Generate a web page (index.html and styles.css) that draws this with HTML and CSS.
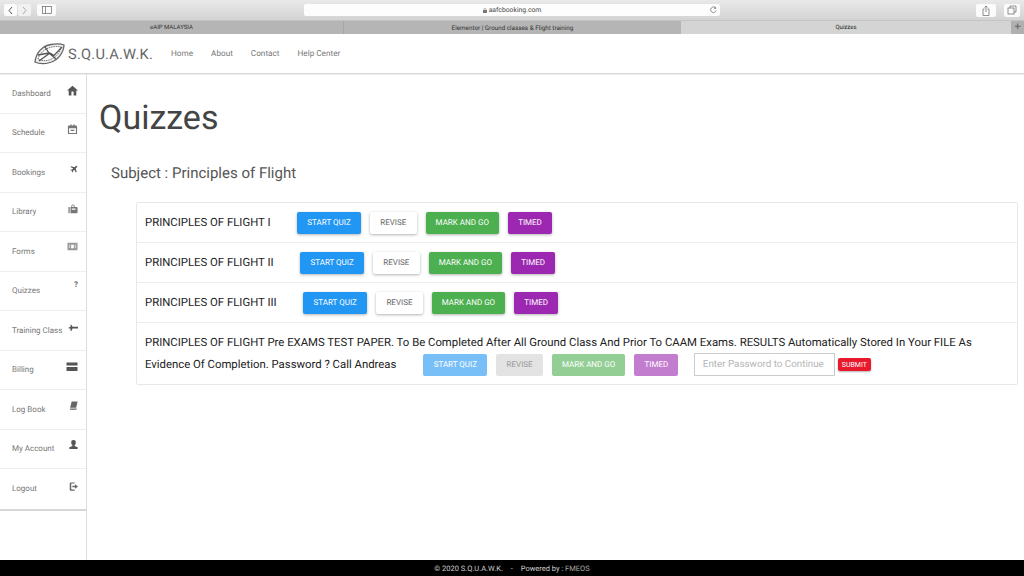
FILE: index.html
```html
<!DOCTYPE html>
<html lang="en">
<head>
<meta charset="utf-8">
<title>Quizzes</title>
<link rel="stylesheet" href="styles.css">
</head>
<body>
<div class="page">
  <div class="toolbar">
    <div class="tb-left">
      <div class="seg">
        <span class="seg-btn"><svg width="7" height="9" viewBox="0 0 7 9"><path d="M5 1 2 4.5 5 8" class="chev"/></svg></span>
        <span class="seg-btn dim"><svg width="7" height="9" viewBox="0 0 7 9"><path d="M2 1 5 4.5 2 8" class="chev light"/></svg></span>
      </div>
      <span class="tb-btn side"><svg width="10" height="8" viewBox="0 0 10 8"><rect x=".5" y=".5" width="9" height="7" class="thin"/><path d="M3.500 .5v7" class="thin"/></svg></span>
    </div>
    <div class="url"><span class="url-text"><svg width="4" height="5" viewBox="0 0 4 5" class="lock"><rect y="2" width="4" height="3" fill="#777"/><path d="M1 2V1.200a1 1 0 0 1 2 0V2" fill="none" stroke="#777" stroke-width=".5"/></svg>aafcbooking.com</span>
      <svg class="reload" width="7" height="8" viewBox="0 0 7 8"><path d="M5.800 2.200A2.800 2.800 0 1 0 6.200 4.500M4.400 .6 5.900 2.200 4 2.800" class="thin"/></svg>
    </div>
    <div class="tb-right">
      <span class="tb-btn sq"><svg width="8" height="11" viewBox="0 0 8 11"><path d="M2.500 4H1v6.500h6V4H5.500M4 7V1M2.500 2.500 4 1l1.500 1.500" class="thin"/></svg></span>
      <span class="tb-btn sq narrow"><svg width="10" height="10" viewBox="0 0 10 10"><rect x="1" y="3" width="6" height="6" class="thin"/><path d="M3 3V1h6v6H7" class="thin"/></svg></span>
    </div>
  </div>
  <div class="tabs">
    <div class="tab first">eAIP MALAYSIA</div>
    <div class="tab second">Elementor | Ground classes &amp; Flight training</div>
    <div class="tab active">Quizzes</div>
    <div class="tab-add">+</div>
  </div>
  <header class="topnav">
    <div class="brand">
      <svg class="logo" width="31" height="24" viewBox="0 0 31 24">
        <g fill="none" stroke="#666">
          <path d="M1 20C2 11 8 4 17 2.500c5-.8 10-.8 13 .5-.5 8-6 15-14 17.500-5 1.500-11 1.500-15-.5z" fill="#eee" stroke-width="1.300"/>
          <path d="M4 17C6 11 11 6.500 18 5c3-.6 6-.6 9 0-1 6-6 11-12 13-4 1-8 .8-11-1z" fill="#fff" stroke-width=".9" stroke-dasharray="1.500 .8"/>
          <path d="M5 19 16 11l4 2.500L28 5M11 5l4 6 7 6M4 13l11-2" stroke="#555" stroke-width="1.300"/>
        </g>
      </svg>
      <span class="brand-name">S.Q.U.A.W.K.</span>
    </div>
    <nav class="links">
      <a>Home</a><a>About</a><a>Contact</a><a>Help Center</a>
    </nav>
  </header>
  <div class="body">
    <aside class="sidebar">
      <div class="side-list">
        <div class="side-item"><span>Dashboard</span><svg class="ico home" width="13" height="13" viewBox="0 0 24 24"><path d="M10 21v-7h4v7h5v-9h3L12 3 2 12h3v9z"/></svg></div>
        <div class="side-item"><span>Schedule</span><svg class="ico sched" width="11" height="11" viewBox="0 0 24 24"><path d="M7 1h3v2h4V1h3v2h3a2 2 0 0 1 2 2v15a2 2 0 0 1-2 2H4a2 2 0 0 1-2-2V5a2 2 0 0 1 2-2h3zM4.500 9v10.500h15V9zm3.500 3.500h8v2.500H8z" fill-rule="evenodd"/></svg></div>
        <div class="side-item"><span>Bookings</span><svg class="ico plane" width="8" height="8" viewBox="0 0 24 24"><path d="M20 2c1.500 0 2 .7 2 2 0 1-.6 2-1.500 2.900L17 10.300 20 21l-2.200 1.500L12.800 14l-3.600 3.500.5 3.500-2 1.500-2-5-4.700-2 1.500-2 3.500.5 3.500-3.600L1.500 6.200 3 4l10.700 3 3.400-3.500C18 2.600 19 2 20 2z"/></svg></div>
        <div class="side-item"><span>Library</span><svg class="ico lib" width="10" height="10" viewBox="0 0 24 24"><path d="M1 7h3v15H2a1 1 0 0 1-1-1zM6 7h2V5a4 4 0 0 1 8 0v2h5a2 2 0 0 1 2 2v11a2 2 0 0 1-2 2H6zm4 0h4V5a2 2 0 0 0-4 0zm-1 4v3h9v-3z" fill-rule="evenodd"/></svg></div>
        <div class="side-item"><span>Forms</span><svg class="ico form" width="11" height="11" viewBox="0 0 24 24"><path d="M2 4h20a1 1 0 0 1 1 1v14a1 1 0 0 1-1 1H2a1 1 0 0 1-1-1V5a1 1 0 0 1 1-1zm2 4v2h3V8zm5 0v8h6V8zm8 0v2h3V8zM4 12v2h3v-2zm13 0v2h3v-2z" fill-rule="evenodd"/></svg></div>
        <div class="side-item"><span>Quizzes</span><b class="qmark">?</b></div>
        <div class="side-item"><span>Training Class</span><svg class="ico train" width="10" height="10" viewBox="0 0 24 24"><path d="M0 12l6-3V4h2l3 5h13v4H11l-3 6H6v-5z"/></svg></div>
        <div class="side-item"><span>Billing</span><svg class="ico bill" width="12" height="12" viewBox="0 0 24 24"><path d="M1 3h22v6H1zM1 12h22v7a1 1 0 0 1-1 1H2a1 1 0 0 1-1-1z"/></svg></div>
        <div class="side-item"><span>Log Book</span><svg class="ico logb" width="9" height="9" viewBox="0 0 24 24"><path d="M7 1h16l-4 17H4a3 3 0 0 0-1 0zM2 21a2 2 0 0 1 2-1h15l1-2v5H3z"/></svg></div>
        <div class="side-item"><span>My Account</span><svg class="ico acct" width="9" height="9" viewBox="0 0 24 24"><path d="M12 0a6 6 0 0 1 6 7c0 3-1 5-3 6v3l8 3v5H1v-5l8-3v-3C7 12 6 10 6 7a6 6 0 0 1 6-7z"/></svg></div>
        <div class="side-item"><span>Logout</span><svg class="ico out" width="9" height="9" viewBox="0 0 24 24"><path d="M4 1h11v3H6v16h9v3H4a2 2 0 0 1-2-2V3a2 2 0 0 1 2-2zM16 6l8 6-8 6v-4H9v-4h7z"/></svg></div>
      </div>
    </aside>
    <main class="content">
      <h1 class="title">Quizzes</h1>
      <h2 class="subject">Subject : Principles of Flight</h2>
      <section class="card">
        <div class="row">
          <span class="row-name">PRINCIPLES OF FLIGHT I</span>
          <div class="btns"><button class="btn blue">START QUIZ</button><button class="btn white">REVISE</button><button class="btn green">MARK AND GO</button><button class="btn purple">TIMED</button></div>
        </div>
        <div class="row">
          <span class="row-name">PRINCIPLES OF FLIGHT II</span>
          <div class="btns"><button class="btn blue">START QUIZ</button><button class="btn white">REVISE</button><button class="btn green">MARK AND GO</button><button class="btn purple">TIMED</button></div>
        </div>
        <div class="row">
          <span class="row-name">PRINCIPLES OF FLIGHT III</span>
          <div class="btns"><button class="btn blue">START QUIZ</button><button class="btn white">REVISE</button><button class="btn green">MARK AND GO</button><button class="btn purple">TIMED</button></div>
        </div>
        <div class="row-long">
          <div class="long-line">PRINCIPLES OF FLIGHT Pre EXAMS TEST PAPER. To Be Completed After All Ground Class And Prior To CAAM Exams. RESULTS Automatically Stored In Your FILE As</div>
          <div class="long-controls">
            <span class="long-end">Evidence Of Completion. Password ? Call Andreas</span>
            <div class="btns faded"><button class="btn blue">START QUIZ</button><button class="btn grey">REVISE</button><button class="btn green">MARK AND GO</button><button class="btn purple">TIMED</button></div>
            <input class="pass" type="text" placeholder="Enter Password to Continue">
            <button class="submit">SUBMIT</button>
          </div>
        </div>
      </section>
    </main>
  </div>
  <footer class="footer">© 2020 S.Q.U.A.W.K. <span class="dash">-</span> Powered by : <span class="fm">FMEOS</span></footer>
</div>
</body>
</html>
```

FILE: styles.css
```css
* { box-sizing: border-box; }
html, body { margin: 0; padding: 0; }
body { font-family: Roboto, "Liberation Sans", sans-serif; background: #fff; color: #333; text-rendering: geometricPrecision; }
button, input { text-rendering: geometricPrecision; }
.page { width: 1024px; height: 576px; display: flex; flex-direction: column; overflow: hidden; }

.toolbar { height: 20px; flex: none; background: linear-gradient(#e9e9e9, #d3d3d3); display: flex; align-items: center; justify-content: space-between; padding: 0 4px; position: relative; }
.tb-left { display: flex; gap: 6px; width: 300px; }
.seg { display: flex; gap: 1px; }
.seg-btn { width: 13px; height: 12px; background: #fbfbfb; border-radius: 2px; display: flex; align-items: center; justify-content: center; }
.seg-btn.dim { background: #f1f1f1; }
.tb-btn { height: 12px; background: #fbfbfb; border-radius: 2px; display: flex; align-items: center; justify-content: center; }
.side { width: 19px; }
.sq { width: 20px; height: 13px; }
.sq.narrow { width: 16px; }
.chev { fill: none; stroke: #555; stroke-width: 1; }
.chev.light { stroke: #aaa; }
.thin { fill: none; stroke: #666; stroke-width: .7; }
.url { position: absolute; left: 304px; width: 416px; top: 4px; height: 12px; background: #fdfdfd; border-radius: 2px; font-size: 6.800px; color: #444; display: flex; align-items: center; justify-content: center; }
.url-text { display: flex; align-items: center; gap: 2px; }
.reload { position: absolute; right: 3px; top: 2px; }
.tb-right { display: flex; gap: 8px; }

.tabs { height: 14px; flex: none; display: flex; background: #b5b5b5; font-size: 6px; color: #333; border-top: 1px solid #c4c4c4; }
.tab { display: flex; align-items: center; justify-content: center; border-right: 1px solid #a6a6a6; }
.tab.first { width: 344px; }
.tab.second { width: 337px; font-size: 6.300px; border-right: none; }
.tab.active { background: #d4d4d4; color: #222; width: 330px; border-right: none; }
.tab-add { width: 13px; background: #b0b0b0; color: #666; font-size: 11px; line-height: 12px; text-align: center; }

.topnav { height: 40px; flex: none; display: flex; align-items: center; border-bottom: 1px solid #d6d6d6; box-shadow: 0 1px 1px rgba(0,0,0,.06); }
.brand { display: flex; align-items: center; margin-left: 34px; width: 137px; }
.logo { flex: none; margin-right: 3px; }
.brand-name { font-size: 14.600px; letter-spacing: .25px; color: #666; white-space: nowrap; }
.links { display: flex; gap: 18px; font-size: 8.200px; color: #777; }

.body { flex: 1; display: flex; min-height: 0; }
.sidebar { width: 87px; flex: none; border-right: 1px solid #ddd; }
.side-list { border-bottom: 2px solid #d8d8d8; }
.side-item { height: 39.500px; display: flex; align-items: flex-start; padding: 14.500px 0 0 12px; font-size: 8px; color: #777; border-bottom: 1px solid #eee; position: relative; white-space: nowrap; }
.side-item:last-child { border-bottom: none; }
.ico { position: absolute; right: 8px; top: 11px; fill: #555; }
.home { right: 7px; top: 10px; }
.sched { fill: #777; top: 10px; }
.plane { top: 12px; }
.lib { fill: #777; }
.form { fill: #999; top: 9px; }
.train { top: 12px; }
.bill { top: 10px; }
.logb { fill: #666; }
.acct { top: 10px; }
.out { top: 13px; fill: #666; }
.qmark { position: absolute; right: 8px; top: 8px; font-size: 8px; color: #666; }

.content { flex: 1; min-width: 0; padding: 0 6px 0 12px; }
.title { margin: 24px 0 0; font-size: 34px; line-height: 40px; font-weight: 400; color: #444; }
.subject { margin: 23.500px 0 0 12px; font-size: 15px; line-height: 22px; font-weight: 400; color: #555; }
.card { margin: 18.500px 0 0 36.500px; border: 1px solid #e8e8e8; border-radius: 2px; }
.row { height: 40px; display: flex; align-items: center; padding: 0 8px 0 8.500px; border-bottom: 1px solid #eee; }
.row-name { font-size: 11.350px; color: #222; white-space: nowrap; position: relative; top: -1px; }
.row .btns { margin-left: 26.500px; }
.btns { display: flex; gap: 9px; }
.btn { height: 22px; padding: 0; border: none; border-radius: 2px; font-family: inherit; font-size: 8px; color: #fff; box-shadow: 0 1px 3px rgba(0,0,0,.3); }
.blue { background: #2196f3; width: 64px; }
.white { background: #fff; color: #666; width: 46.500px; }
.grey { width: 46.500px; }
.green { background: #4caf50; width: 73.500px; }
.purple { background: #9c27b0; width: 44px; }
.faded .btn { opacity: .6; box-shadow: none; }
.faded .grey { opacity: 1; background: #e3e3e3; color: #9a9a9a; }
.row-long { padding: 9px 8px 0 8.500px; height: 61px; font-size: 11.350px; line-height: 21.500px; color: #222; white-space: nowrap; }
.long-controls { display: flex; align-items: center; height: 22px; }
.long-end { margin-right: 27px; }
.pass { width: 141px; height: 23px; border: 1px solid #ccc; padding: 0 8px; margin: 0 3px 0 15.500px; font-family: inherit; font-size: 9.800px; color: #555; background: #fff; outline: none; }
.pass::placeholder { color: #b5b5b5; opacity: 1; }
.submit { height: 13px; width: 33px; padding: 0; border: none; border-radius: 2px; background: #e8192c; color: #fff; font-family: inherit; font-size: 7px; box-shadow: 0 1px 2px rgba(0,0,0,.3); }

.footer { height: 16px; flex: none; background: #000; color: #ccc; font-size: 7.500px; display: flex; align-items: center; justify-content: center; white-space: pre; }
.dash { margin: 0 6px; }
.fm { color: #aaa; }
```
